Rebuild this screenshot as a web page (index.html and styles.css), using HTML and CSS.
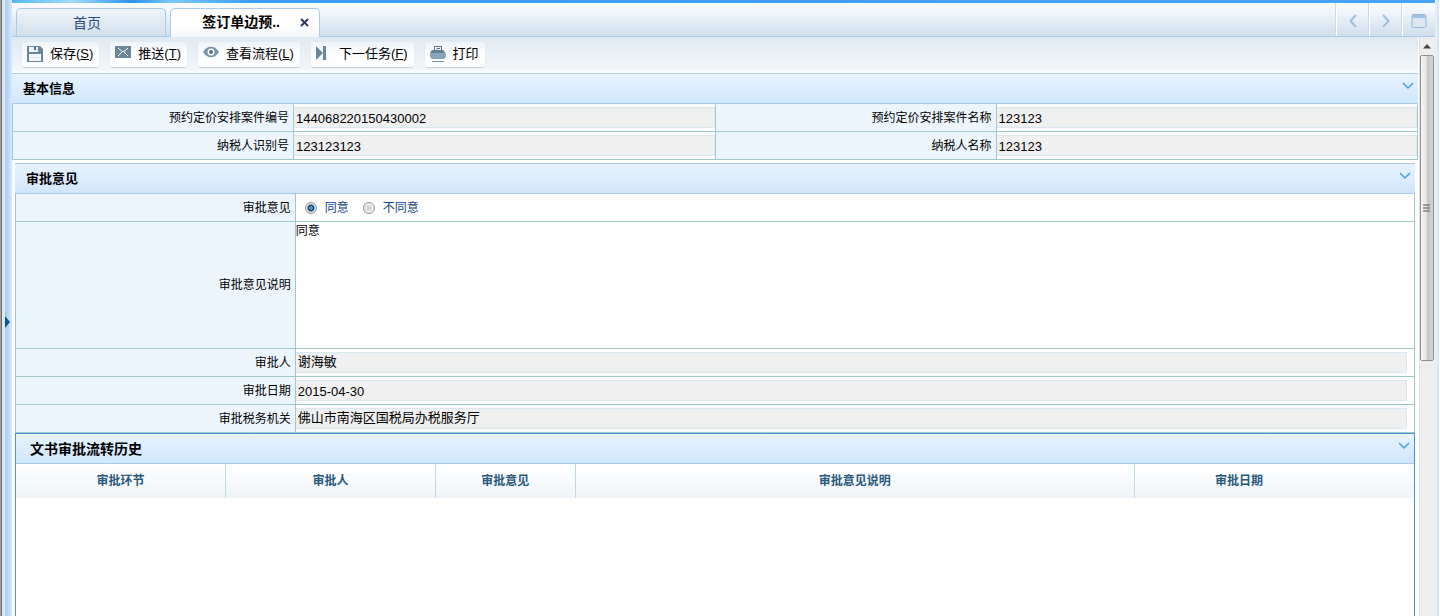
FILE: index.html
```html
<!DOCTYPE html>
<html lang="zh-CN">
<head>
<meta charset="utf-8">
<title>签订单边预约定价安排</title>
<link rel="stylesheet" href="styles.css">
</head>
<body>
<div class="window">
  <div class="splitter"><button class="splitter-toggle" type="button" aria-label="展开"></button></div>
  <div class="frame">
    <div class="banner"></div>
    <nav class="tabbar">
      <button class="tab" type="button">首页</button>
      <div class="tab tab-active">
        <span class="tab-title">签订单边预..</span>
        <button class="tab-close" type="button" aria-label="关闭"><svg width="9" height="9" viewBox="0 0 9 9"><path d="M1 1l7 7M8 1l-7 7" stroke="#2d3b60" stroke-width="2" fill="none"/></svg></button>
      </div>
      <div class="tab-tools">
        <button class="tool" type="button" aria-label="向左"><svg width="16" height="16" viewBox="0 0 16 16"><path d="M11 2L5.500 8l5.500 6" stroke="#9dbfdf" stroke-width="2" fill="none"/></svg></button>
        <button class="tool" type="button" aria-label="向右"><svg width="16" height="16" viewBox="0 0 16 16"><path d="M5 2l5.500 6L5 14" stroke="#9dbfdf" stroke-width="2" fill="none"/></svg></button>
        <button class="tool" type="button" aria-label="最大化"><svg width="16" height="16" viewBox="0 0 16 16"><rect x="1" y="1.500" width="14" height="13" rx="1.500" fill="#dbe7f3" stroke="#93b5d6"/><path d="M1 2h14v3H1z" fill="#9dc2e4"/></svg></button>
      </div>
    </nav>
    <div class="view">
      <main class="page">
        <div class="toolbar">
          <button class="action" type="button"><svg class="icon" width="18" height="18" viewBox="0 0 18 18"><path d="M1 1h13l3 3v13H1z" fill="#68879d"/><path d="M3 2h9v5H3z" fill="#eef4f8"/><path d="M8 2h2v3H8z" fill="#536f85"/><path d="M3 9h12v7H3z" fill="#f4f8fa"/><path d="M4 12.500h10" stroke="#dbe4ea"/></svg><span>保存(<u>S</u>)</span></button>
          <button class="action" type="button"><svg class="icon" width="18" height="18" viewBox="0 0 18 18"><path d="M1 1h16v12H1z" fill="#68879d"/><path d="M4 3l5 4 5-4M4 11l4-4M14 11l-4-4" stroke="#fff" fill="none"/></svg><span>推送(<u>T</u>)</span></button>
          <button class="action" type="button"><svg class="icon" width="18" height="18" viewBox="0 0 18 18"><path d="M1 7C5 0 13 0 17 7C13 14 5 14 1 7z" fill="#7795aa"/><circle cx="9" cy="7" r="3.500" fill="#fff"/><circle cx="9" cy="7" r="2" fill="#536f85"/></svg><span>查看流程(<u>L</u>)</span></button>
          <button class="action" type="button"><svg class="icon" width="18" height="18" viewBox="0 0 18 18"><path d="M1 1l7 7V1h3v14H8V8l-7 7z" fill="#68879d"/></svg><span>下一任务(<u>F</u>)</span></button>
          <button class="action" type="button"><svg class="icon" width="18" height="18" viewBox="0 0 18 18"><path d="M5.500 5V1.500h7V5M8 4.500V3.500h3" fill="none" stroke="#536f85"/><path d="M3 5h11l3 4v3l-2 2H3l-2-2V9z" fill="#86a5bb"/><path d="M3 5h11l2 3H1z" fill="#607f95"/><path d="M3 16.500h12" stroke="#7795aa"/></svg><span>打印</span></button>
        </div>
        <section>
          <header class="heading"><h2>基本信息</h2><button class="fold" type="button" aria-label="折叠"><svg width="12" height="8" viewBox="0 0 12 8"><path d="M1 1l5 5 5-5" stroke="#4a9fe0" stroke-width="1.500" fill="none"/></svg></button></header>
          <div class="form form-pair">
            <label for="case-no">预约定价安排案件编号</label><div class="field"><input id="case-no" type="text" readonly value="144068220150430002"></div>
            <label for="case-name">预约定价安排案件名称</label><div class="field"><input id="case-name" type="text" readonly value="123123"></div>
            <label for="tax-no">纳税人识别号</label><div class="field"><input id="tax-no" type="text" readonly value="123123123"></div>
            <label for="tax-name">纳税人名称</label><div class="field"><input id="tax-name" type="text" readonly value="123123"></div>
          </div>
        </section>
        <section class="inset">
          <header class="heading"><h2>审批意见</h2><button class="fold" type="button" aria-label="折叠"><svg width="12" height="8" viewBox="0 0 12 8"><path d="M1 1l5 5 5-5" stroke="#4a9fe0" stroke-width="1.500" fill="none"/></svg></button></header>
          <div class="form form-single">
            <span class="caption" id="opinion">审批意见</span>
            <div class="field choices" role="radiogroup" aria-labelledby="opinion">
              <input type="radio" name="opinion" id="agree" checked><label for="agree">同意</label>
              <input type="radio" name="opinion" id="disagree"><label for="disagree">不同意</label>
            </div>
            <label for="note">审批意见说明</label><div class="field"><textarea id="note">同意</textarea></div>
            <label for="approver">审批人</label><div class="field field-short"><input id="approver" class="song" type="text" readonly value="谢海敏"></div>
            <label for="date">审批日期</label><div class="field field-short"><input id="date" type="text" readonly value="2015-04-30"></div>
            <label for="office">审批税务机关</label><div class="field field-short"><input id="office" class="song" type="text" readonly value="佛山市南海区国税局办税服务厅"></div>
          </div>
        </section>
        <section class="history">
          <header class="heading"><h2>文书审批流转历史</h2><button class="fold" type="button" aria-label="折叠"><svg width="12" height="8" viewBox="0 0 12 8"><path d="M1 1l5 5 5-5" stroke="#4a9fe0" stroke-width="1.500" fill="none"/></svg></button></header>
          <table>
            <colgroup><col class="c-step"><col class="c-step"><col class="c-opinion"><col class="c-note"><col class="c-date"></colgroup>
            <thead><tr><th>审批环节</th><th>审批人</th><th>审批意见</th><th>审批意见说明</th><th class="date-head">审批日期</th></tr></thead>
          </table>
        </section>
      </main>
      <div class="scroll" aria-hidden="true">
        <div class="scroll-up"><svg width="8" height="5" viewBox="0 0 8 5"><path d="M0 4.500L4 0l4 4.500z" fill="#444"/></svg></div>
        <div class="scroll-thumb"><svg width="8" height="8" viewBox="0 0 8 8"><path d="M0 1h7M0 4h7M0 7h7" stroke="#555"/></svg></div>
      </div>
    </div>
  </div>
  <div class="edge"></div>
</div>
</body>
</html>
```
FILE: styles.css
```css
* { box-sizing: border-box; }
body {
  margin: 0;
  background: #fff;
  color: #000;
  font: 12px/18px "Liberation Sans", "Noto Sans CJK SC", sans-serif;
}
button {
  margin: 0;
  padding: 0;
  border: 0;
  background: none;
  color: inherit;
  font: inherit;
}
svg { display: block; flex: none; }

.window { display: flex; min-height: 100vh; }
.splitter {
  display: flex;
  flex: none;
  align-items: center;
  width: 12px;
  padding: 28px 0 0 5px;
  background: linear-gradient(90deg, #a2a2a2 0 1px, #686868 1px 2px, #dce9f6 2px 5px, #a4c8ed 5px, #c6dffa 10px, #deedff 12px);
}
.splitter-toggle {
  border-style: solid;
  border-width: 6px 0 6px 5px;
  border-color: transparent transparent transparent #12549b;
}
.frame { display: flex; flex: 1; flex-direction: column; min-width: 0; }
.banner { height: 3px; background: linear-gradient(90deg, #59b6f5, #9fdcfa 60px, #2b93ea 120px, #7cc9f8 160px, #3a9cf2 240px, #48a3fa); }
.edge { flex: none; width: 5px; background: linear-gradient(90deg, #e6eef6 0 2px, #d6e8f8 2px 4px, #fff 4px); }

.tabbar {
  display: flex;
  align-items: flex-end;
  gap: 4px;
  height: 34px;
  padding-left: 4px;
  border-bottom: 1px solid #a9cbed;
  background: linear-gradient(#fbfdff, #e6eff7 50%, #cfdeeb);
}
.tab {
  width: 150px;
  height: 28px;
  padding-right: 8px;
  border: 1px solid #aacae9;
  border-bottom: 0;
  border-radius: 5px 5px 0 0;
  background: linear-gradient(#eff5fa, #d0dfeb);
  color: #2d4a7c;
  font-size: 14px;
  line-height: 28px;
}
.tab-active {
  display: flex;
  align-items: center;
  justify-content: flex-end;
  gap: 20px;
  height: 29px;
  margin-bottom: -1px;
  padding: 0 10px 2px 0;
  background: linear-gradient(#fff 60%, #f2f6fa);
  color: #000;
  font-weight: bold;
}
.tab-tools { display: flex; align-self: stretch; margin-left: auto; }
.tool {
  display: flex;
  align-items: center;
  justify-content: center;
  width: 33px;
  border-left: 1px solid #fff;
  box-shadow: -1px 0 #c8d9e9;
  padding-top: 2px;
}

.view { display: flex; flex: 1; }
.page { display: flex; flex: 1; flex-direction: column; min-width: 0; padding-right: 1px; }
.toolbar {
  display: flex;
  gap: 11px;
  padding: 5px 10px;
  height: 36px;
  background: linear-gradient(#dfe9f1, #f2f6f9 90%, #fff);
}
.action {
  display: flex;
  align-items: center;
  gap: 6px;
  height: 25px;
  padding: 0 6px 2px 4px;
  border-radius: 3px;
  background: linear-gradient(#edf3f7, #fcfdfe 40%, #fff);
  box-shadow: 0 1px 1px #c9ced2;
  font-size: 13px;
  white-space: nowrap;
}

.heading {
  display: flex;
  align-items: center;
  justify-content: space-between;
  height: 31px;
  padding: 0 4px 0 11px;
  border-top: 1px solid #a9cbe8;
  border-bottom: 1px solid #a9cbe8;
  background: linear-gradient(#e7f3ff, #d0e6fd);
}
.heading h2 { margin: 0; font-size: 13px; }
.fold { padding-bottom: 5px; }
.inset { margin: 3px 3px 0; }

.form {
  display: grid;
  border: solid #a2c9c9;
  border-width: 0 1px 0 0;
}
.form-pair { grid-template-columns: 20fr 30fr 20fr 30fr; }
.form-single { grid-template-columns: 20fr 80fr; }
.form > label, .caption {
  display: flex;
  align-items: center;
  justify-content: flex-end;
  padding-right: 4px;
  border: solid #a2c9c9;
  border-width: 0 0 1px 1px;
  background: #edf5fc;
}
.field {
  display: flex;
  align-items: center;
  min-height: 28px;
  border: solid #a2c9c9;
  border-width: 0 0 1px 1px;
}
.field-short { padding-right: 7px; }
.field input[type="text"] {
  flex: 1;
  min-width: 0;
  height: 21px;
  margin: 0;
  padding: 1px 2px 0;
  border: 1px solid #d9e7f1;
  border-left: 0;
  background: #f0f0f0;
  color: #000;
  font: 13px/18px "Liberation Sans", sans-serif;
}
.field input.song[type="text"] {
  padding: 0 2px 4px;
  font-family: "Noto Sans CJK SC", sans-serif;
}
.field textarea {
  width: 100%;
  height: 126px;
  padding: 0;
  border: 0;
  outline: 0;
  resize: none;
  background: #fff;
  font: inherit;
}
.choices { color: #103f8b; }
.choices label { margin: 0 14px 0 8px; }
.choices input {
  appearance: none;
  width: 12px;
  height: 12px;
  margin: 0;
  border: 1px solid #8e8f8f;
  border-radius: 50%;
  background: radial-gradient(#ccc, #f4f4f4 70%);
}
.choices input:first-child { margin-left: 9px; }
.choices input:checked { background: radial-gradient(#3ba5d8 0 1px, #123f68 3px, #e6edf2 4px); }

.history {
  flex: 1;
  margin: 0 3px;
  border: 1px solid #4594d2;
  border-bottom: 0;
}
.history .heading { height: 30px; padding: 0 4px 0 14px; border-top: 0; }
.history h2 { font-size: 14px; }
table { width: 100%; border-collapse: collapse; table-layout: fixed; }
th {
  height: 34px;
  padding: 0;
  border-right: 1px solid #bfdad9;
  background: linear-gradient(#fff, #eff4f8);
  color: #27597c;
}
th:last-child { border-right: 0; }
.date-head { padding-right: 71px; }
.c-step { width: 15%; }
.c-opinion { width: 10%; }
.c-note { width: 40%; }
.c-date { width: 20%; }

.scroll {
  flex: none;
  width: 16px;
  padding-right: 1px;
  border-left: 1px solid #e0e0e0;
  background: #eee;
}
.scroll-up { display: flex; align-items: center; justify-content: center; height: 18px; }
.scroll-thumb {
  display: flex;
  align-items: center;
  justify-content: center;
  height: 306px;
  border: 1px solid #8f8f8f;
  border-radius: 2px;
  background: linear-gradient(90deg, #f6f6f6, #e4e4e6 45%, #c6c6ca 50%, #d2d2d5);
}
```
